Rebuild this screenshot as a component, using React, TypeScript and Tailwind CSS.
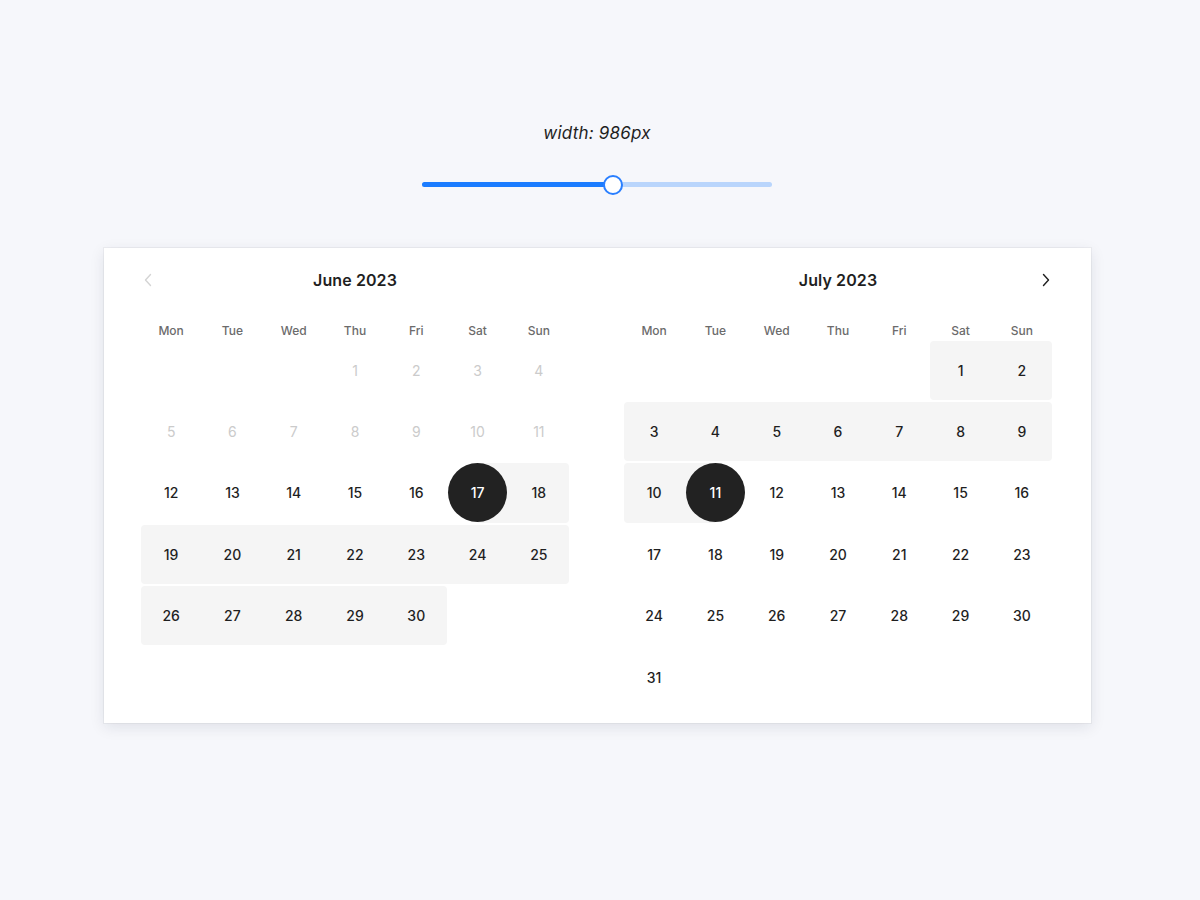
import React from 'react';

type Day = { n: number; muted?: boolean } | null;

interface MonthProps {
  title: string;
  weeks: Day[][];
  inRange: (r: number, c: number) => boolean;
  selected: { r: number; c: number };
  selectedSide: 'left' | 'right';
  prev?: boolean;
  next?: boolean;
}

const WEEKDAYS = ['Mon', 'Tue', 'Wed', 'Thu', 'Fri', 'Sat', 'Sun'];

function Chevron({ dir }: { dir: 'left' | 'right' }) {
  return (
    <svg width="8" height="14" viewBox="0 0 8 14" fill="none">
      {dir === 'left' ? (
        <path d="M6.5 1.5L1.5 7l5 5.5" stroke="currentColor" strokeWidth="1.4" strokeLinecap="round" strokeLinejoin="round" />
      ) : (
        <path d="M1.5 1.5l5 5.5-5 5.5" stroke="currentColor" strokeWidth="1.4" strokeLinecap="round" strokeLinejoin="round" />
      )}
    </svg>
  );
}

function Month({ title, weeks, inRange, selected, selectedSide, prev, next }: MonthProps) {
  return (
    <div className="w-[429px] shrink-0">
      {/* title row */}
      <div className="relative h-[34px] flex items-center justify-center">
        {prev && (
          <button className="absolute left-[3px] top-1/2 -translate-y-1/2 text-[#d4d4d4]">
            <Chevron dir="left" />
          </button>
        )}
        <span className="text-[16px] font-semibold text-[#1f1f1f] tracking-[0.1px]">{title}</span>
        {next && (
          <button className="absolute right-[3px] top-1/2 -translate-y-1/2 text-[#1f1f1f]">
            <Chevron dir="right" />
          </button>
        )}
      </div>

      {/* weekdays */}
      <div className="mt-[25px] grid grid-cols-7 h-[19px] items-center">
        {WEEKDAYS.map((w) => (
          <div key={w} className="text-center text-[12px] font-medium text-[#6b6b6b]">
            {w}
          </div>
        ))}
      </div>

      {/* weeks */}
      <div className="flex flex-col gap-[2px]">
        {weeks.map((week, r) => (
          <div key={r} className="grid grid-cols-7 h-[59.4px]">
            {week.map((d, c) => {
              const isSel = selected.r === r && selected.c === c;
              const range = inRange(r, c);
              const leftIn = c > 0 && inRange(r, c - 1);
              const rightIn = c < 6 && inRange(r, c + 1);
              let bg = '';
              if (isSel) {
                bg =
                  selectedSide === 'left'
                    ? 'bg-[linear-gradient(to_right,transparent_50%,#f5f5f5_50%)]'
                    : 'bg-[linear-gradient(to_right,#f5f5f5_50%,transparent_50%)]';
              } else if (range) {
                bg = 'bg-[#f5f5f5]';
                if (!leftIn) bg += ' rounded-l-[4px]';
                if (!rightIn) bg += ' rounded-r-[4px]';
              }
              return (
                <div key={c} className={`flex items-center justify-center ${bg}`}>
                  {d && isSel ? (
                    <div className="w-[59px] h-[59px] rounded-full bg-[#222222] flex items-center justify-center text-white text-[14px] font-medium">
                      {d.n}
                    </div>
                  ) : d ? (
                    <span
                      className={`text-[14px] ${
                        d.muted ? 'text-[#cbcbcb]' : 'text-[#1f1f1f] font-medium'
                      }`}
                    >
                      {d.n}
                    </span>
                  ) : null}
                </div>
              );
            })}
          </div>
        ))}
      </div>
    </div>
  );
}

function buildWeeks(startOffset: number, days: number, mutedUntil = 0): Day[][] {
  const cells: Day[] = [];
  for (let i = 0; i < startOffset; i++) cells.push(null);
  for (let n = 1; n <= days; n++) cells.push({ n, muted: n <= mutedUntil });
  while (cells.length % 7 !== 0) cells.push(null);
  const weeks: Day[][] = [];
  for (let i = 0; i < cells.length; i += 7) weeks.push(cells.slice(i, i + 7));
  return weeks;
}

export default function App() {
  const june = buildWeeks(3, 30, 11);
  const july = buildWeeks(5, 31);

  // June range: 17 through 30
  const juneIn = (r: number, c: number) => {
    const d = june[r][c];
    return !!d && d.n >= 17;
  };
  // July range: 1 through 11
  const julyIn = (r: number, c: number) => {
    const d = july[r][c];
    return !!d && d.n <= 11;
  };

  return (
    <div
      className="min-h-[900px] w-full bg-[#f6f7fb] flex flex-col items-center pr-[6px]"
      style={{ fontFamily: 'Inter, "Noto Sans", sans-serif' }}
    >
      <div className="pt-[121px] text-[17px] italic text-[#1f1f1f] tracking-[0.2px]">width: 986px</div>

      {/* slider */}
      <div className="mt-[28px] relative w-[350px] h-[20px] flex items-center">
        <div className="w-full h-[5px] rounded-full bg-[#b9d5fc] overflow-hidden flex">
          <div className="w-[191px] h-full bg-[#1b7cff]" />
        </div>
        <div className="absolute left-[181px] top-0 w-[20px] h-[20px] rounded-full bg-white border-2 border-[#2a7fff]" />
      </div>

      {/* calendar card */}
      <div className="mt-[53px] w-[987px] h-[475px] bg-white shadow-[0_4px_14px_rgba(20,30,60,0.10),0_0_0_1px_rgba(0,0,0,0.04)] flex pl-[37px] pt-[15px] gap-[54px]">
        <Month
          title="June 2023"
          weeks={june}
          inRange={juneIn}
          selected={{ r: 2, c: 5 }}
          selectedSide="left"
          prev
        />
        <Month
          title="July 2023"
          weeks={july}
          inRange={julyIn}
          selected={{ r: 2, c: 1 }}
          selectedSide="right"
          next
        />
      </div>
    </div>
  );
}
